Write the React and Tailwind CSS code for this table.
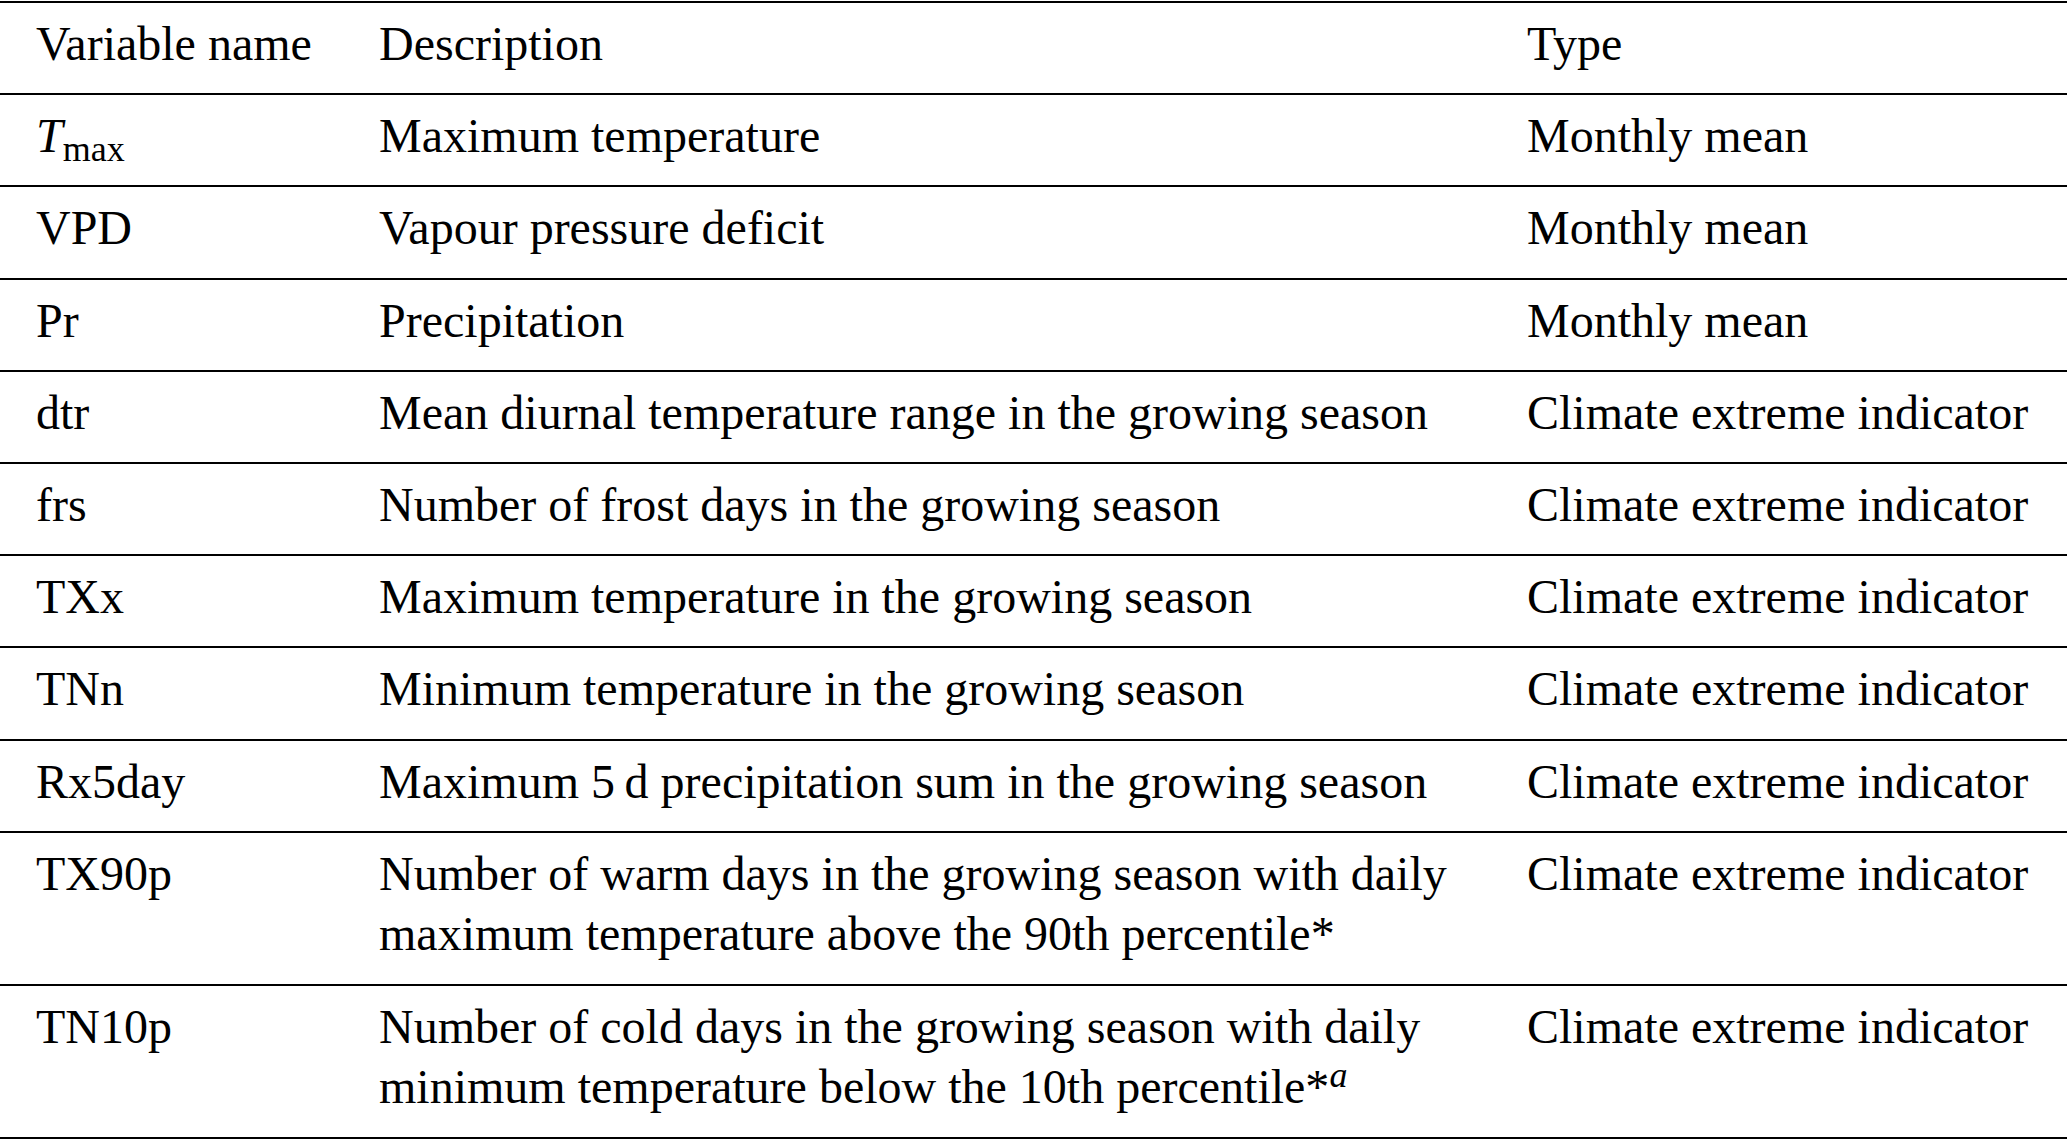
const rows = [
  {
    name: (
      <>
        <span className="italic">T</span>
        <span className="text-[36px] leading-none relative top-[9px]">max</span>
      </>
    ),
    desc: 'Maximum temperature',
    type: 'Monthly mean',
  },
  { name: 'VPD', desc: 'Vapour pressure deficit', type: 'Monthly mean' },
  { name: 'Pr', desc: 'Precipitation', type: 'Monthly mean' },
  { name: 'dtr', desc: 'Mean diurnal temperature range in the growing season', type: 'Climate extreme indicator' },
  { name: 'frs', desc: 'Number of frost days in the growing season', type: 'Climate extreme indicator' },
  { name: 'TXx', desc: 'Maximum temperature in the growing season', type: 'Climate extreme indicator' },
  { name: 'TNn', desc: 'Minimum temperature in the growing season', type: 'Climate extreme indicator' },
  { name: 'Rx5day', desc: 'Maximum 5\u2009d precipitation sum in the growing season', type: 'Climate extreme indicator' },
  {
    name: 'TX90p',
    desc: (
      <>
        Number of warm days in the growing season with daily
        <br />
        maximum temperature above the 90th percentile*
      </>
    ),
    type: 'Climate extreme indicator',
  },
  {
    name: 'TN10p',
    desc: (
      <>
        Number of cold days in the growing season with daily
        <br />
        minimum temperature below the 10th percentile*
        <span className="italic text-[36px] leading-none relative -top-[16px]">a</span>
      </>
    ),
    type: 'Climate extreme indicator',
  },
];

function Row({ name, desc, type }) {
  return (
    <div className="grid grid-cols-[343px_1148px_1fr] border-b-2 border-black pt-[11px] pb-[18.4px]">
      <div className="pl-[36px] whitespace-nowrap">{name}</div>
      <div className="pl-[36px] whitespace-nowrap">{desc}</div>
      <div className="pl-[36px] whitespace-nowrap">{type}</div>
    </div>
  );
}

export default function App() {
  return (
    <div
      className="w-[2067px] h-[1140px] bg-white text-black text-[48px] leading-[60.8px] overflow-hidden"
      style={{ fontFamily: '"Liberation Serif", "Times New Roman", serif' }}
    >
      <div className="mt-px border-t-2 border-black">
        <Row name="Variable name" desc="Description" type="Type" />
        {rows.map((r, i) => (
          <Row key={i} {...r} />
        ))}
      </div>
    </div>
  );
}
